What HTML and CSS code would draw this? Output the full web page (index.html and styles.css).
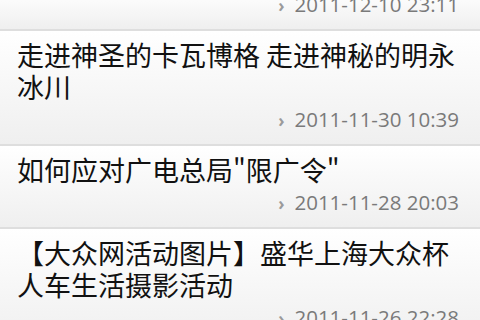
FILE: index.html
```html
<!DOCTYPE html>
<html lang="zh-CN">
<head>
    <meta charset="UTF-8">
    <meta name="viewport" content="width=device-width, initial-scale=1.0">
    <title>新闻列表</title>
    <link rel="stylesheet" href="styles.css">
</head>
<body>
    <div class="news-list">
        <div class="item partial">
            <div class="date"><span class="arrow">›</span>2011-12-10 23:11</div>
        </div>
        <div class="item">
            <div class="title">走进神圣的卡瓦博格 走进神秘的明永冰川</div>
            <div class="date"><span class="arrow">›</span>2011-11-30 10:39</div>
        </div>
        <div class="item">
            <div class="title">如何应对广电总局"限广令"</div>
            <div class="date"><span class="arrow">›</span>2011-11-28 20:03</div>
        </div>
        <div class="item">
            <div class="title">【大众网活动图片】盛华上海大众杯人车生活摄影活动</div>
            <div class="date"><span class="arrow">›</span>2011-11-26 22:28</div>
        </div>
    </div>
</body>
</html>
```

FILE: styles.css
```css
body {
    margin: 0;
    padding: 0;
    background-color: #fff;
    font-family: "Open Sans", "Noto Sans CJK SC", sans-serif;
    overflow: hidden;
}
.news-list {
    display: flex;
    flex-direction: column;
    width: 480px;
}
.item {
    padding: 8px 21px 10px 17px;
    background: linear-gradient(#ffffff, #efefef);
    border-bottom: 2px solid #dedede;
}
.item.partial {
    padding-top: 0;
    margin-top: -9px;
}
.title {
    font-family: "Noto Sans CJK SC", sans-serif;
    font-size: 27px;
    line-height: 32px;
    color: #111;
}
.date {
    margin-top: 3px;
    text-align: right;
    font-size: 20.5px;
    line-height: 26px;
    color: #7a7a7a;
}
.partial .date {
    margin-top: 0;
}
.arrow {
    margin-right: 10px;
    font-size: 17px;
    font-weight: bold;
    color: #9a9a9a;
}
```
